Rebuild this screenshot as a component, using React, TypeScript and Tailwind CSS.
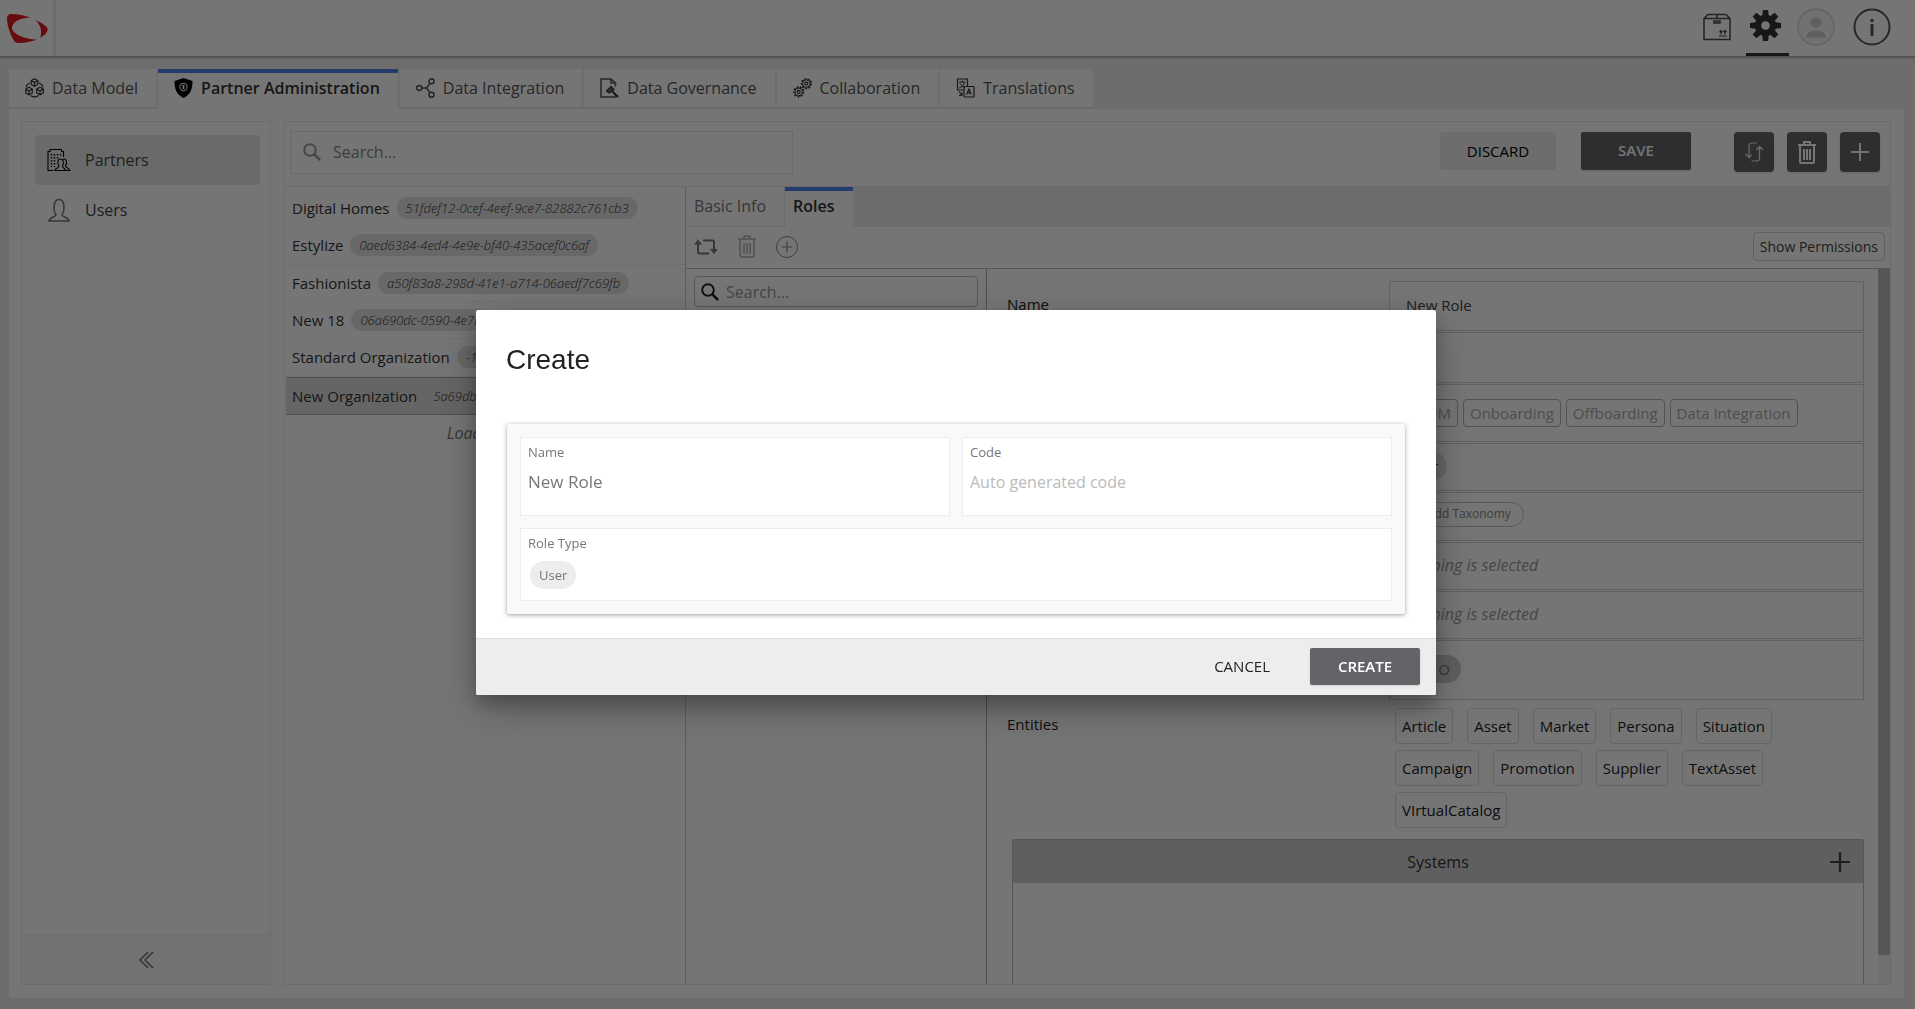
import type { ReactNode } from "react";

type IconProps = { className?: string };

const organizations = [
  { name: "Digital Homes", code: "51fdef12-0cef-4eef-9ce7-82882c761cb3" },
  { name: "Estylize", code: "0aed6384-4ed4-4e9e-bf40-435acef0c6af" },
  { name: "Fashionista", code: "a50f83a8-298d-41e1-a714-06aedf7c69fb" },
  { name: "New 18", code: "06a690dc-0590-4e7b" },
  { name: "Standard Organization", code: "-1" },
  { name: "New Organization", code: "5a69db", selected: true },
];

const entities = [
  "Article",
  "Asset",
  "Market",
  "Persona",
  "Situation",
  "Campaign",
  "Promotion",
  "Supplier",
  "TextAsset",
  "VIrtualCatalog",
];

const physicalCatalogs = ["PIM", "Onboarding", "Offboarding", "Data Integration"];

function Logo() {
  return (
    <svg width="53" height="56" viewBox="0 0 53 56" fill="#e01a22" aria-hidden="true">
      <path d="M7 18.5C7 15.5 8.5 14 11.5 14C18 14 25 15.6 30.5 17.6C22 18 12 21 12 28C12 34 26 39.5 37 39.6C31 42 25 43 19 43C15.5 43 14.3 41.5 13 39C9.5 32.5 7 25 7 18.5Z" />
      <path d="M35.6 20C41 22.5 46 25.5 47.6 28.6C48.3 31 45.5 35 40.3 37.8C42.3 31 40.5 25 35.6 20Z" />
    </svg>
  );
}

function BoxIcon() {
  return (
    <svg width="28" height="28" viewBox="0 0 28 28" fill="none" stroke="#4a4a4a" strokeWidth="1.5" aria-hidden="true">
      <path d="M1 5.5L5 1.5H23L27 5.5V26.5H1ZM1 5.5H27M14 1.5V5.5" />
      <rect x="11" y="8" width="6" height="2" />
      <path d="M16 23H24M18 21.5V17.5M22 21.5V17.5M16.5 19L18 17.5L19.5 19M20.5 19L22 17.5L23.5 19" strokeWidth="1.2" />
    </svg>
  );
}

function GearIcon() {
  return (
    <svg width="31" height="31" viewBox="0 0 32 32" fill="#333" aria-hidden="true">
      {[0, 45, 90, 135].map((angle) => (
        <path key={angle} d="M13.3 0H18.7L19.5 8V24L18.7 32H13.3L12.5 24V8Z" transform={`rotate(${angle} 16 16)`} />
      ))}
      <circle cx="16" cy="16" r="11" />
      <circle cx="16" cy="16" r="4.5" fill="#fff" />
    </svg>
  );
}

function AvatarIcon() {
  return (
    <svg width="38" height="38" viewBox="0 0 38 38" aria-hidden="true">
      <circle cx="19" cy="19" r="18" fill="#f6f6f6" stroke="#dadada" strokeWidth="1.5" />
      <circle cx="19" cy="14.5" r="5.2" fill="#cfcfcf" />
      <path d="M9 29.5C9 20.5 29 20.5 29 29.5Z" fill="#cfcfcf" />
    </svg>
  );
}

function InfoIcon() {
  return (
    <svg width="38" height="38" viewBox="0 0 38 38" fill="none" aria-hidden="true">
      <circle cx="19" cy="19" r="17.5" stroke="#555" strokeWidth="2" />
      <path d="M19 16V28M19 11V14" stroke="#555" strokeWidth="3" />
    </svg>
  );
}

function DataModelIcon() {
  return (
    <svg width="19" height="20" viewBox="0 0 19 20" fill="none" stroke="#333" strokeWidth="1.2" aria-hidden="true">
      {[
        [9.5, 4.5],
        [4, 13],
        [15, 13],
      ].map(([x, y]) => (
        <g key={x} transform={`translate(${x} ${y})`}>
          <path d="M0 -3.8L3.3 -2V2L0 3.8L-3.3 2V-2ZM-3.3 -2L0 0L3.3 -2M0 0V3.8" />
        </g>
      ))}
      <path d="M5 5C2.5 6 1.2 7.5 1 9.5M14 5C16.5 6 17.8 7.5 18 9.5M5.5 17.5C8 19.3 11 19.3 13.5 17.5" />
    </svg>
  );
}

function ShieldIcon() {
  return (
    <svg width="19" height="20" viewBox="0 0 19 20" aria-hidden="true">
      <path d="M9.5 0L18.5 3C18.5 11 16.5 16.5 9.5 20C2.5 16.5 0.5 11 0.5 3Z" fill="#000" />
      <circle cx="9.5" cy="9" r="3.6" fill="none" stroke="#ddd" strokeWidth="1.2" />
      <path d="M9.5 7V11" stroke="#fff" strokeWidth="1.8" />
    </svg>
  );
}

function IntegrationIcon() {
  return (
    <svg width="19" height="20" viewBox="0 0 19 20" fill="none" stroke="#4a4a4a" strokeWidth="1.4" aria-hidden="true">
      <circle cx="3.2" cy="10" r="2.5" />
      <circle cx="15.5" cy="3.2" r="2.5" />
      <circle cx="15.5" cy="16.8" r="2.5" />
      <path d="M5.7 10H10.5L14 5.3M10.5 10L14 14.7" />
    </svg>
  );
}

function GovernanceIcon() {
  return (
    <svg width="19" height="20" viewBox="0 0 19 20" fill="none" stroke="#555" strokeWidth="1.5" aria-hidden="true">
      <path d="M15.5 16.5V19H1V1H11L15.5 5V8.5M11 1V5H15.5" />
      <path d="M6.5 13L11 8.5L14 11.5L9.5 15Z" fill="#666" stroke="#333" strokeWidth="1.2" />
      <path d="M12.5 13.5L18 19" stroke="#333" strokeWidth="2" />
    </svg>
  );
}

function CollaborationIcon() {
  return (
    <svg width="19" height="20" viewBox="0 0 19 20" fill="none" stroke="#333" aria-hidden="true">
      <circle cx="5.7" cy="13.8" r="4.8" strokeWidth="1.6" strokeDasharray="2 1.3" />
      <circle cx="5.7" cy="13.8" r="3.8" strokeWidth="1" />
      <circle cx="5.7" cy="13.8" r="1.5" strokeWidth="1.2" />
      <circle cx="13.4" cy="5.6" r="4.8" strokeWidth="1.6" strokeDasharray="2 1.3" />
      <circle cx="13.4" cy="5.6" r="3.8" strokeWidth="1" />
      <circle cx="13.4" cy="5.6" r="1.5" strokeWidth="1.2" />
    </svg>
  );
}

function TranslationsIcon() {
  return (
    <svg width="19" height="20" viewBox="0 0 19 20" fill="none" stroke="#333" strokeWidth="1.2" aria-hidden="true">
      <path d="M7 12H1.5V1H11.5V8" />
      <path d="M3 4H9.5M6.2 2.5V4M8.5 4C8 7 6 9 3.2 10M4.2 5.5C5 7.5 7 9 9 9.8" strokeWidth="1" />
      <rect x="8" y="8.5" width="10" height="10.5" rx="0.5" />
      <path d="M10.7 16.5L13 11L15.3 16.5M11.5 14.8H14.5" />
      <path d="M3 13.5L6 17.5M6 17.5V14.5M6 17.5H3" />
    </svg>
  );
}

function PartnersIcon() {
  return (
    <svg width="24" height="24" viewBox="0 0 24 24" fill="none" stroke="#000" strokeWidth="1.1" aria-hidden="true">
      <path d="M6 22.5H1V3.500H3V1.5H14.5V3.500H16.5V9" />
      <path d="M4.500 6V19M7.500 6V19M10.500 6V12M13.500 6V9" strokeWidth="1.4" strokeDasharray="1.5 1.5" />
      <path d="M7.500 22.500C7.500 20.500 12 20.500 12 18C10 15.500 10.500 11 13.500 11C16.500 11 17 15.500 15.500 18C15.500 20 18.500 20.500 18.500 22.500Z" />
      <path d="M16 11.500C19.500 9.500 20.500 15 18.500 18C18.500 20 23 20.500 23 22.500H18.500" />
    </svg>
  );
}

function UserIcon() {
  return (
    <svg width="24" height="24" viewBox="0 0 24 24" fill="none" stroke="#777" strokeWidth="1.5" aria-hidden="true">
      <path d="M2 23C2 19 9 19.5 9 16.5C6.5 13.5 5.5 1.5 12 1.5C18.5 1.5 17.5 13.5 15 16.5C15 19.5 22 19 22 23Z" />
    </svg>
  );
}

function SearchIcon({ className }: IconProps) {
  return (
    <svg width="18" height="18" viewBox="0 0 18 18" fill="none" strokeWidth="2" className={className} aria-hidden="true">
      <circle cx="7" cy="7" r="5.8" />
      <path d="M11.2 11.2L17 17" strokeWidth="2.5" />
    </svg>
  );
}

function SwapIcon() {
  return (
    <svg width="20" height="20" viewBox="0 0 20 20" fill="none" stroke="#e6e6e6" strokeWidth="1.2" aria-hidden="true">
      <path d="M13 1H8C6 1 5 2 5 4V15.5M1.5 12L5 15.5L7.5 12.5M7.5 19H12.5C14.5 19 15.5 18 15.5 16V5M12.5 8L15.5 4.5L19 8" />
    </svg>
  );
}

function TrashIcon({ className }: IconProps) {
  return (
    <svg width="18" height="23" viewBox="0 0 18 23" fill="none" className={className} aria-hidden="true">
      <path d="M6 3.5V1H12V3.5M0 4H18M2 5V21C2 21.7 2.3 22 3 22H15C15.7 22 16 21.7 16 21V5M6 8V19M9 8V19M12 8V19" />
    </svg>
  );
}

function PlusIcon({ className }: IconProps) {
  return (
    <svg width="20" height="20" viewBox="0 0 20 20" fill="none" strokeWidth="2" className={className} aria-hidden="true">
      <path d="M1 10H19M10 1V19" />
    </svg>
  );
}

function RefreshIcon() {
  return (
    <svg width="24" height="18" viewBox="0 0 24 18" fill="none" stroke="#777" strokeWidth="2" aria-hidden="true">
      <path d="M4 5V14C4 15 4.5 15.5 5.5 15.5H15M9 2.5H18.5C19.5 2.5 20 3 20 4V12" />
      <path d="M0 6.5L4 1.5L8 6.5ZM16 11L20 16L24 11Z" fill="#777" stroke="none" />
    </svg>
  );
}

function CollapseIcon() {
  return (
    <svg width="16" height="18" viewBox="0 0 16 18" fill="none" stroke="#777" strokeWidth="1.6" aria-hidden="true">
      <path d="M10 1L2 9L10 17M15 1L7 9L15 17" />
    </svg>
  );
}

function Tab({ icon, label, active }: { icon: ReactNode; label: string; active?: boolean }) {
  return (
    <button
      type="button"
      className={
        active
          ? "flex h-10 items-center gap-2 border-t-4 border-[#5080f0] bg-white pr-[18px] pb-1.5 pl-4 text-base font-semibold text-[#333]"
          : "flex h-10 items-center gap-2 border-b-2 border-[#e8e8e8] bg-white pr-[18px] pl-4 text-base text-[#555]"
      }
    >
      {icon}
      {label}
    </button>
  );
}

function FormRow({ label, className, children }: { label?: string; className: string; children?: ReactNode }) {
  return (
    <div className="flex">
      <div className="flex-1 pt-[11px] text-[15px] leading-6 text-[#222]">{label}</div>
      <div className={`flex w-[475px] items-center border border-[#d4d4d4] ${className}`}>{children}</div>
    </div>
  );
}

function Header() {
  return (
    <header className="relative z-10 flex h-[57px] shrink-0 items-stretch border-b border-[#aaa] bg-white shadow-[0_1px_2px_rgba(0,0,0,0.25)]">
      <a href="#" aria-label="Home" className="border-r-3 border-[#eaeaea]">
        <Logo />
      </a>
      <div className="ml-auto flex items-start pr-6">
        <button type="button" aria-label="Catalog" className="mt-[13px] mr-[15px]">
          <BoxIcon />
        </button>
        <button type="button" aria-label="Settings" className="flex h-14 w-[43px] border-b-3 border-[#333] pt-[10px] pl-1">
          <GearIcon />
        </button>
        <button type="button" aria-label="Account" className="mt-2 ml-2">
          <AvatarIcon />
        </button>
        <button type="button" aria-label="Info" className="mt-2 ml-[18px]">
          <InfoIcon />
        </button>
      </div>
    </header>
  );
}

function Sidebar() {
  return (
    <aside className="flex w-[250px] shrink-0 flex-col border border-[#ebebeb]">
      <nav className="flex-1 pt-[13px] pr-[10px] pl-[13px]">
        <button type="button" className="flex h-[50px] w-full items-center gap-[14px] rounded-sm bg-[#e8e8e8] px-3 text-base text-[#444]">
          <PartnersIcon />
          Partners
        </button>
        <button type="button" className="flex h-[50px] w-full items-center gap-[14px] px-3 text-base text-[#444]">
          <UserIcon />
          Users
        </button>
      </nav>
      <button type="button" aria-label="Collapse" className="flex h-[50px] items-center justify-center border-t border-[#ebebeb] bg-[#f9f9f9]">
        <CollapseIcon />
      </button>
    </aside>
  );
}

function Toolbar() {
  return (
    <div className="flex h-[65px] shrink-0 items-start border-b border-[#e8e8e8] pt-[9px] pr-[6px] pl-[5px]">
      <label className="flex h-[43px] w-[503px] items-center gap-3 border border-[#e6e6e6] px-3 pb-0.5">
        <SearchIcon className="stroke-[#999]" />
        <input
          aria-label="Search partners"
          placeholder="Search..."
          className="min-w-0 flex-1 bg-transparent text-base outline-none placeholder:text-[#888]"
        />
      </label>
      <div className="ml-auto flex items-start pt-px pr-1">
        <button type="button" className="h-[38px] w-[116px] rounded-xs bg-[#eee] text-[15px] text-black">
          DISCARD
        </button>
        <button
          type="button"
          className="ml-[25px] h-[38px] w-[110px] rounded-xs bg-[#636468] pb-0.5 text-[15px] font-semibold text-white shadow"
        >
          SAVE
        </button>
        <div className="ml-[43px] flex gap-[13px]">
          <button type="button" aria-label="Transfer" className="flex size-10 items-center justify-center rounded-sm bg-[#636468] shadow">
            <SwapIcon />
          </button>
          <button type="button" aria-label="Delete" className="flex size-10 items-center justify-center rounded-sm bg-[#636468] shadow">
            <TrashIcon className="stroke-white stroke-2" />
          </button>
          <button type="button" aria-label="Add" className="flex size-10 items-center justify-center rounded-sm bg-[#636468] shadow">
            <PlusIcon className="stroke-white" />
          </button>
        </div>
      </div>
    </div>
  );
}

function OrganizationList() {
  return (
    <div className="w-[401px] shrink-0 border-r border-[#ccc] px-px pt-[3px]">
      <ul className="flex h-[225px] flex-col">
        {organizations.map((org) => (
          <li
            key={org.name}
            className={
              org.selected
                ? "flex flex-1 items-center gap-[7px] border-y border-[#aaa] bg-[#dcdcdc] pl-[6px]"
                : "flex flex-1 items-center gap-[7px] border-b border-[#f4f4f4] pl-[6px]"
            }
          >
            <span className="text-[15px] text-[#333]">{org.name}</span>
            <span
              className={
                org.selected
                  ? "h-[22px] rounded-full px-[9px] text-[13px] leading-[22px] font-light text-[#333] italic"
                  : "h-[22px] rounded-full bg-[#e2e2e2] px-[9px] text-[13px] leading-[22px] font-light text-[#333] italic"
              }
            >
              {org.code}
            </span>
          </li>
        ))}
      </ul>
      <p className="pt-[6px] text-center text-base text-[#777] italic">Load more</p>
    </div>
  );
}

function RoleForm() {
  return (
    <div className="flex min-h-0 min-w-0 flex-1">
      <div className="min-w-0 flex-1 overflow-hidden pt-3 pr-[14px] pl-5">
        <div className="flex flex-col gap-px">
          <FormRow label="Name" className="h-[50px] px-4 pb-0.5 text-[15px] text-[#444]">
            New Role
          </FormRow>
          <FormRow className="h-[51px]" />
          <FormRow className="h-[58px] gap-[5px] px-[6px]">
            {physicalCatalogs.map((name) => (
              <span key={name} className="h-7 rounded border border-[#b4b4b4] px-[6px] text-[15px] leading-[26px] text-[#aaa] first:w-[62px] first:text-right">
                {name}
              </span>
            ))}
          </FormRow>
          <FormRow className="h-12 px-[6px] pb-0.5">
            <span className="h-7 rounded-full bg-[#e2e2e2] pr-[9px] pl-[14px] text-[13px] leading-7 text-[#333]">User</span>
          </FormRow>
          <FormRow className="h-[49px] px-[6px] pb-[5px]">
            <button type="button" className="flex h-[25px] items-center gap-[6px] rounded-full border border-[#c4c4c4] pr-3 pl-4 text-xs text-[#888]">
              <PlusIcon className="size-2 stroke-[#888]" />
              Add Taxonomy
            </button>
          </FormRow>
          <FormRow className="h-12 px-4 pb-0.5 text-base text-[#999] italic">Nothing is selected</FormRow>
          <FormRow className="h-12 px-4 pb-0.5 text-base text-[#999] italic">Nothing is selected</FormRow>
          <FormRow className="h-[60px] px-[6px] pb-0.5">
            <span className="h-7 w-[65px] rounded-full bg-[#cfcfcf] pr-[11px] text-right text-[15px] leading-7 text-[#777]">O</span>
          </FormRow>
        </div>

        <div className="flex pt-2">
          <div className="flex-1 pt-1 text-[15px] leading-6 text-[#222]">Entities</div>
          <div className="flex w-[475px] flex-wrap gap-x-[14px] gap-y-[6px] pr-16 pl-[6px]">
            {entities.map((name) => (
              <span key={name} className="h-9 rounded border border-[#dcdcdc] px-[6px] text-[15px] leading-[34px] text-[#222]">
                {name}
              </span>
            ))}
          </div>
        </div>

        <section className="mt-[11px] ml-[5px] h-60 rounded-t-xs border border-[#bbb]">
          <div className="grid h-[43px] grid-cols-[1fr_auto_1fr] items-center bg-[#cfcfcf] px-3">
            <h3 className="col-start-2 text-base text-[#333]">Systems</h3>
            <button type="button" aria-label="Add system" className="justify-self-end">
              <PlusIcon className="size-[22px] stroke-[#444]" />
            </button>
          </div>
        </section>
      </div>
      <div className="w-3 bg-[#f4f4f4]">
        <div className="h-[96%] bg-[#bbb]" />
      </div>
    </div>
  );
}

function RolesPanel() {
  return (
    <div className="flex min-w-0 flex-1 flex-col">
      <div className="flex h-10 shrink-0 border-b border-[#ececec] bg-[#eee]">
        <button type="button" className="h-full w-[99px] border-r border-[#e6e6e6] bg-white pb-0.5 pl-2 text-left text-base text-[#777]">
          Basic Info
        </button>
        <button type="button" className="h-10 w-[68px] border-t-4 border-[#5080f0] bg-white pb-1.5 pl-2 text-left text-base font-semibold text-[#333]">
          Roles
        </button>
      </div>
      <div className="flex h-[42px] shrink-0 items-center border-b border-[#bbb] pr-[5px] pb-0.5 pl-2">
        <button type="button" aria-label="Refresh">
          <RefreshIcon />
        </button>
        <button type="button" aria-label="Delete role" className="ml-5">
          <TrashIcon className="stroke-[#888]" />
        </button>
        <button
          type="button"
          aria-label="Add role"
          className="ml-5 flex size-[22px] items-center justify-center rounded-full border border-[#888]"
        >
          <PlusIcon className="size-3 stroke-[#888]" />
        </button>
        <button type="button" className="ml-auto h-[29px] rounded border border-[#d4d4d4] px-[6px] text-sm text-[#444]">
          Show Permissions
        </button>
      </div>
      <div className="flex min-h-0 flex-1">
        <div className="w-[301px] shrink-0 border-r border-[#aaa] px-2 pt-[7px]">
          <label className="flex h-[31px] items-center gap-[7px] rounded border border-[#bbb] px-[6px]">
            <SearchIcon className="stroke-[#222]" />
            <input
              aria-label="Search roles"
              placeholder="Search..."
              className="min-w-0 flex-1 bg-transparent text-base outline-none placeholder:text-[#999]"
            />
          </label>
        </div>
        <RoleForm />
      </div>
    </div>
  );
}

function CreateDialog() {
  return (
    <div className="fixed inset-0 z-20 flex items-center justify-center bg-black/54 pr-[3px] pb-1">
      <div
        role="dialog"
        aria-modal="true"
        aria-labelledby="create-title"
        className="w-full max-w-[960px] overflow-hidden rounded-xs bg-white shadow-[0_14px_45px_rgba(0,0,0,0.25),0_10px_18px_rgba(0,0,0,0.22)]"
      >
        <h2 id="create-title" className="px-[30px] pt-[34px] font-['Liberation_Sans',sans-serif] text-[28px] leading-8 text-[#222]">
          Create
        </h2>
        <div className="px-[31px] pt-12 pb-6">
          <div className="grid grid-cols-2 gap-3 rounded-xs bg-[#f9f9f9] p-[13px] shadow-[0_1px_4px_rgba(0,0,0,0.4)]">
            <div className="flex h-[79px] flex-col border border-[#ededed] bg-white px-[7px] pt-1">
              <label htmlFor="role-name" className="text-[13px] leading-5 text-[#777]">
                Name
              </label>
              <input id="role-name" defaultValue="New Role" className="mt-2 w-full text-[17px] leading-6 text-[#777] outline-none" />
            </div>
            <div className="flex h-[79px] flex-col border border-[#ededed] bg-white px-[7px] pt-1">
              <label htmlFor="role-code" className="text-[13px] leading-5 text-[#777]">
                Code
              </label>
              <input
                id="role-code"
                placeholder="Auto generated code"
                className="mt-2 w-full text-base leading-6 outline-none placeholder:text-[#bbb]"
              />
            </div>
            <div className="col-span-2 h-[73px] border border-[#ededed] bg-white px-[7px] pt-1">
              <div className="text-[13px] leading-5 text-[#777]">Role Type</div>
              <button type="button" className="mt-2 ml-0.5 block h-7 rounded-full bg-[#ededed] px-[9px] text-[13px] leading-7 text-[#777]">
                User
              </button>
            </div>
          </div>
        </div>
        <div className="flex h-[57px] items-center justify-end gap-4 border-t border-[#ddd] bg-[#ededed] pr-4 pb-0.5">
          <button type="button" className="h-[37px] px-6 text-[15px] text-[#222]">
            CANCEL
          </button>
          <button type="button" className="h-[37px] w-[110px] rounded-xs bg-[#636468] text-[15px] font-semibold text-white shadow">
            CREATE
          </button>
        </div>
      </div>
    </div>
  );
}

export default function App() {
  return (
    <div className="flex h-screen flex-col overflow-hidden bg-[#eee] font-['Open_Sans','Noto_Sans',sans-serif]">
      <Header />
      <nav className="mt-3 ml-[9px] flex shrink-0 gap-0.5">
        <Tab icon={<DataModelIcon />} label="Data Model" />
        <Tab icon={<ShieldIcon />} label="Partner Administration" active />
        <Tab icon={<IntegrationIcon />} label="Data Integration" />
        <Tab icon={<GovernanceIcon />} label="Data Governance" />
        <Tab icon={<CollaborationIcon />} label="Collaboration" />
        <Tab icon={<TranslationsIcon />} label="Translations" />
      </nav>
      <main className="mr-[11px] mb-[11px] ml-[9px] flex min-h-0 flex-1 gap-[13px] bg-white pt-3 pr-[13px] pb-[13px] pl-3">
        <Sidebar />
        <section className="flex min-w-0 flex-1 flex-col border border-[#ebebeb]">
          <Toolbar />
          <div className="flex min-h-0 flex-1">
            <OrganizationList />
            <RolesPanel />
          </div>
        </section>
      </main>
      <CreateDialog />
    </div>
  );
}
